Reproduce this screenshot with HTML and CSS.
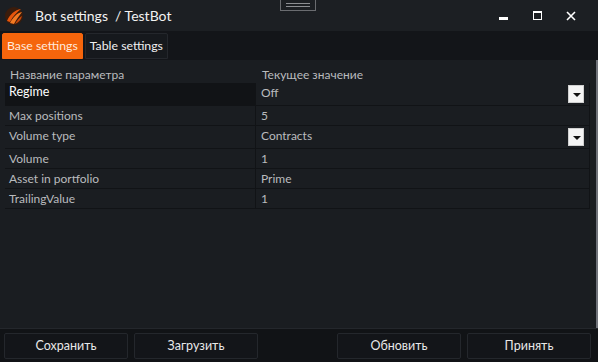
FILE: index.html
```html
<!DOCTYPE html>
<html lang="ru">
<head>
    <meta charset="UTF-8">
    <title>Bot settings</title>
    <link rel="stylesheet" href="styles.css">
</head>
<body>
    <div class="window">
        <div class="title-bar">
            <svg class="logo" width="20" height="20" viewBox="0 0 20 20">
                <circle cx="10" cy="10" r="9" fill="#3a1c0c"/>
                <path d="M3 15 C6 8 11 4 17 3 C13 6 9 10 6 16 Z" fill="#e8560c"/>
                <path d="M6 17 C9 11 13 7 18 6 C15 10 12 14 10 18 Z" fill="#f47a22"/>
                <path d="M11 18 C13 14 16 11 18 10 C17 14 15 16 11 18 Z" fill="#c9470a"/>
            </svg>
            <span class="title">Bot settings&nbsp; / TestBot</span>
            <div class="grip"><span></span><span></span></div>
            <div class="win-buttons">
                <span class="win-btn"><svg width="9" height="9" viewBox="0 0 9 9"><rect x="0" y="6" width="9" height="3" fill="#fff"/></svg></span>
                <span class="win-btn"><svg width="9" height="9" viewBox="0 0 9 9"><rect x="0.5" y="0.5" width="8" height="8" fill="none" stroke="#fff"/><rect x="0" y="0" width="9" height="2" fill="#fff"/></svg></span>
                <span class="win-btn"><svg width="10" height="10" viewBox="0 0 10 10"><path d="M1 1 L9 9 M9 1 L1 9" stroke="#fff" stroke-width="1.6"/></svg></span>
            </div>
        </div>

        <div class="tabs">
            <div class="tab active">Base settings</div>
            <div class="tab">Table settings</div>
        </div>

        <div class="content">
            <div class="grid">
                <div class="row head">
                    <div class="cell">Название параметра</div>
                    <div class="cell">Текущее значение</div>
                </div>
                <div class="row tall selected">
                    <div class="cell name">Regime</div>
                    <div class="cell value">Off<span class="drop"></span></div>
                </div>
                <div class="row">
                    <div class="cell name">Max positions</div>
                    <div class="cell value">5</div>
                </div>
                <div class="row tall">
                    <div class="cell name">Volume type</div>
                    <div class="cell value">Contracts<span class="drop"></span></div>
                </div>
                <div class="row">
                    <div class="cell name">Volume</div>
                    <div class="cell value">1</div>
                </div>
                <div class="row">
                    <div class="cell name">Asset in portfolio</div>
                    <div class="cell value">Prime</div>
                </div>
                <div class="row">
                    <div class="cell name">TrailingValue</div>
                    <div class="cell value">1</div>
                </div>
            </div>
        </div>

        <div class="footer">
            <button>Сохранить</button>
            <button>Загрузить</button>
            <div class="spacer"></div>
            <button>Обновить</button>
            <button>Принять</button>
        </div>
    </div>
</body>
</html>
```

FILE: styles.css
```css
* {
    margin: 0;
    padding: 0;
    box-sizing: border-box;
    font-family: 'Lato', 'Noto Sans', sans-serif;
}
body {
    background: #1a1d21;
    width: 598px;
    height: 362px;
    overflow: hidden;
}
.window {
    display: flex;
    flex-direction: column;
    height: 362px;
}
.title-bar {
    position: relative;
    height: 31px;
    display: flex;
    align-items: center;
    background: #1c1f23;
    padding-left: 4px;
}
.logo {
    margin-right: 11px;
}
.title {
    color: #f2f2f2;
    font-size: 14px;
}
.grip {
    position: absolute;
    left: 280px;
    top: -1px;
    width: 36px;
    height: 12px;
    border: 1px solid #6a6c70;
    display: flex;
    flex-direction: column;
    align-items: center;
    justify-content: center;
    gap: 2px;
}
.grip span {
    width: 24px;
    height: 1px;
    background: #8c8e92;
}
.win-buttons {
    margin-left: auto;
    display: flex;
    padding-right: 10px;
}
.win-btn {
    width: 34px;
    display: flex;
    justify-content: center;
    align-items: center;
}
.tabs {
    height: 29px;
    background: #131519;
    display: flex;
    align-items: flex-end;
    gap: 2px;
    padding-left: 2px;
    padding-bottom: 1px;
}
.tab {
    height: 26px;
    line-height: 24px;
    padding: 0 4px;
    font-size: 12.3px;
    color: #f0f0f0;
    background: #16191d;
    border: 1px solid #24272c;
    border-radius: 2px 2px 0 0;
}
.tab.active {
    background: #f5650c;
    border-color: #f5650c;
    color: #ffe9dc;
}
.content {
    flex: 1;
    background: #1a1d21;
    border-right: 2px solid #70737a;
    padding: 5px 6px 0 5px;
}
.grid {
    display: flex;
    flex-direction: column;
}
.row {
    display: grid;
    grid-template-columns: 251px 1fr;
    height: 20px;
    border-bottom: 1px solid #111316;
}
.row.tall {
    height: 23px;
}
.row.head {
    height: 18px;
    border-bottom: none;
}
.cell {
    font-size: 12px;
    color: #b9bbbe;
    padding: 1px 4px 0 4px;
    line-height: 17px;
    border-right: 1px solid #111316;
    position: relative;
}
.row.head .cell {
    padding-left: 5px;
    padding-top: 2px;
    line-height: 15px;
    border-right: none;
}
.row.head .cell:last-child {
    padding-left: 6px;
}
.cell.value {
    padding-left: 5px;
}
.row.tall .cell {
    padding-top: 1px;
}
.row.selected .cell.name {
    background: #111316;
    color: #ffffff;
    font-size: 12.5px;
    padding-top: 0;
}
.drop {
    position: absolute;
    right: 5px;
    top: 2px;
    width: 16px;
    height: 18px;
    background: #f4f4f4;
    border: 1px solid #d0d0d0;
}
.drop::after {
    content: '';
    position: absolute;
    left: 4px;
    top: 7px;
    border-left: 4px solid transparent;
    border-right: 4px solid transparent;
    border-top: 4px solid #111;
}
.footer {
    height: 34px;
    background: #111316;
    border-top: 1px solid #24272c;
    display: flex;
    align-items: center;
    gap: 6px;
    padding: 0 7px 0 4px;
}
.spacer {
    flex: 1;
}
.footer button {
    width: 124px;
    height: 26px;
    background: #131519;
    border: 1px solid #24272c;
    border-radius: 2px;
    color: #e8e8e8;
    font-size: 12.5px;
}
```
